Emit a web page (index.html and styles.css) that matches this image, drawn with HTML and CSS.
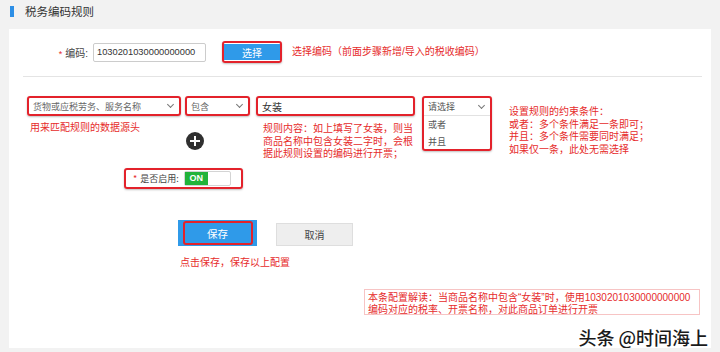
FILE: index.html
```html
<!DOCTYPE html>
<html>
    <head>
        <meta charset="UTF-8" />
        <link rel="stylesheet" href="styles.css">
    </head>
    <body>
        <div class="page-head">
            <span class="bar"></span>
            <span class="title">税务编码规则</span>
        </div>

        <div class="panel">
            <div class="code-row">
                <label class="lbl"><em>*</em>编码:</label>
                <input class="code-input" type="text" value="1030201030000000000">
                <div class="mark btn-mark"><button class="btn-pick">选择</button></div>
                <span class="note">选择编码（前面步骤新增/导入的税收编码）</span>
            </div>

            <div class="divider"></div>

            <div class="rule-row">
                <div class="col col-src">
                    <div class="mark sel">货物或应税劳务、服务名称<i class="chev"></i></div>
                    <p class="note note-src">用来匹配规则的数据源头</p>
                </div>
                <div class="col col-op">
                    <div class="mark sel">包含<i class="chev"></i></div>
                    <div class="plus"><span></span></div>
                </div>
                <div class="col col-val">
                    <div class="mark sel val">女装</div>
                    <p class="note note-val">规则内容：如上填写了女装，则当<br>商品名称中包含女装二字时，会根<br>据此规则设置的编码进行开票；</p>
                </div>
                <div class="col col-logic">
                    <div class="mark drop">
                        <div class="drop-head">请选择<i class="chev"></i></div>
                        <div class="drop-opt">或者</div>
                        <div class="drop-opt">并且</div>
                    </div>
                </div>
                <p class="note note-logic">设置规则的约束条件：<br>或者：多个条件满足一条即可；<br>并且：多个条件需要同时满足；<br>如果仅一条，此处无需选择</p>
            </div>

            <div class="mark enable-row">
                <em>*</em><span class="enable-lbl">是否启用:</span>
                <span class="toggle"><b>ON</b></span>
            </div>

            <div class="btn-row">
                <button class="btn-save">保存</button>
                <button class="btn-cancel">取消</button>
            </div>
            <p class="note note-save">点击保存，保存以上配置</p>

            <div class="explain">
                本条配置解读：当商品名称中包含“女装”时，使用1030201030000000000<br>
                编码对应的税率、开票名称，对此商品订单进行开票
            </div>

            <div class="watermark">头条 @时间海上</div>
        </div>
    </body>
</html>
```

FILE: styles.css
```css
body {
    margin: 0;
    background-color: #f2f2f2;
    font-family: "Liberation Sans", "Noto Sans CJK SC", sans-serif;
    color: #333;
}

p {
    margin: 0;
}

em {
    font-style: normal;
    color: #e62b2b;
}

.page-head {
    height: 29px;
    display: flex;
    align-items: center;
    padding-left: 10px;
    box-sizing: border-box;
    padding-bottom: 7px;
}

.bar {
    width: 4px;
    height: 11px;
    background-color: #2d8fe6;
    margin-right: 11px;
}

.title {
    font-size: 11.5px;
    color: #333;
}

.panel {
    margin: 0 9px;
    height: 319px;
    background-color: white;
    padding-top: 12px;
    box-sizing: border-box;
}

.note {
    color: #e62b2b;
    font-size: 10px;
    line-height: 12.5px;
}

.mark {
    border: 2px solid #e3222b;
    border-radius: 3px;
    box-sizing: border-box;
    box-shadow: 0 1px 2px rgba(0, 0, 0, 0.25);
}

/* 编码 */
.code-row {
    display: flex;
    align-items: center;
    height: 22px;
}

.lbl {
    width: 79px;
    text-align: right;
    font-size: 10px;
    color: #444;
    margin-right: 5px;
}

.lbl em {
    margin-right: 3px;
    font-size: 9px;
}

.code-input {
    width: 113px;
    height: 19px;
    box-sizing: border-box;
    border: 1px solid #ccc;
    border-radius: 2px;
    padding: 0 0 0 3px;
    font-family: "Liberation Sans", sans-serif;
    font-size: 9.3px;
    color: #333;
}

.btn-mark {
    margin-left: 16px;
    width: 60px;
    height: 22px;
    padding: 1px 0;
}

.btn-pick {
    display: block;
    width: 100%;
    height: 100%;
    border: 0;
    background-color: #2f9ae9;
    color: white;
    font-family: "Noto Sans CJK SC", sans-serif;
    font-size: 10px;
    padding: 0;
}

.code-row .note {
    margin-left: 10px;
}

.divider {
    margin: 13px 9px 0 14px;
    height: 1px;
    background-color: #e4e4e4;
}

/* 规则 */
.rule-row {
    display: flex;
    align-items: flex-start;
    margin-top: 19px;
    padding-left: 18px;
    height: 68px;
}

.sel {
    height: 20px;
    display: flex;
    align-items: center;
    padding-left: 4px;
    padding-right: 6px;
    font-size: 9px;
    color: #666;
    font-family: "Noto Sans CJK SC", sans-serif;
}

.chev {
    margin-left: auto;
    width: 4px;
    height: 4px;
    border-right: 1px solid #777;
    border-bottom: 1px solid #777;
    transform: rotate(45deg);
    margin-top: -3px;
}

.col-src .sel {
    width: 154px;
}

.col-op {
    margin-left: 4px;
}

.col-op .sel {
    width: 65px;
}

.plus {
    margin: 16px 0 0 1px;
    width: 18px;
    height: 18px;
    border-radius: 50%;
    background-color: #303030;
    display: flex;
    align-items: center;
    justify-content: center;
}

.plus span {
    width: 10px;
    height: 10px;
    background:
        linear-gradient(#fff, #fff) center / 10px 2px no-repeat,
        linear-gradient(#fff, #fff) center / 2px 10px no-repeat;
}

.col-val {
    margin-left: 6px;
}

.col-val .val {
    width: 159px;
    color: #333;
    font-size: 10px;
}

.note-src {
    margin: 6px 0 0 3px;
}

.note-val {
    margin: 7px 0 0 7px;
}

.col-logic {
    margin-left: 7px;
}

.drop {
    width: 70px;
    height: 55px;
    font-family: "Noto Sans CJK SC", sans-serif;
    font-size: 9px;
    color: #555;
}

.drop-head {
    height: 17px;
    display: flex;
    align-items: center;
    padding: 0 6px 0 4px;
    border-bottom: 1px solid #e2e2e2;
}

.drop-opt {
    height: 17px;
    line-height: 17px;
    padding-left: 4px;
}

.note-logic {
    margin: 10px 0 0 17px;
}

/* 是否启用 */
.enable-row {
    margin: 4px 0 0 115px;
    width: 119px;
    height: 21px;
    display: flex;
    align-items: center;
    padding-left: 7px;
    font-size: 9px;
    font-family: "Noto Sans CJK SC", sans-serif;
}

.enable-lbl {
    margin-left: 3px;
    color: #444;
}

.toggle {
    margin-left: 5px;
    width: 47px;
    height: 15px;
    box-sizing: border-box;
    border: 1px solid #d4d4d4;
    border-radius: 2px;
    display: flex;
}

.toggle b {
    width: 23px;
    background-color: #22b33a;
    color: white;
    font-family: "Liberation Sans", sans-serif;
    font-size: 9px;
    line-height: 13px;
    text-align: center;
}

/* 按钮 */
.btn-row {
    margin: 31px 0 0 169px;
    display: flex;
    align-items: flex-end;
}

.btn-save {
    position: relative;
    width: 79px;
    height: 26px;
    border: 0;
    background-color: #2f9ae9;
    color: white;
    font-family: "Noto Sans CJK SC", sans-serif;
    font-size: 10.5px;
    padding: 0;
}

.btn-save::after {
    content: "";
    position: absolute;
    left: 5px;
    right: 4px;
    top: 1px;
    bottom: 1px;
    border: 2px solid #e3222b;
    border-radius: 3px;
}

.btn-cancel {
    margin-left: 19px;
    width: 77px;
    height: 23px;
    border: 1px solid #dedede;
    background-color: #eeeeee;
    color: #444;
    font-family: "Noto Sans CJK SC", sans-serif;
    font-size: 10px;
    padding: 0;
}

.note-save {
    margin: 11px 0 0 171px;
}

.explain {
    margin: 19px 0 0 355px;
    width: 336px;
    height: 26px;
    box-sizing: border-box;
    border: 1px solid #f7c4c4;
    padding: 2px 0 0 3px;
    color: #e62b2b;
    font-size: 10px;
    line-height: 12px;
}

.watermark {
    margin-top: 12px;
    text-align: right;
    padding-right: 3px;
    font-family: "Noto Sans CJK SC", sans-serif;
    font-size: 18px;
    font-weight: 500;
    line-height: 20px;
    color: #1a1a1a;
    text-shadow: 0 0 2px #fff;
}
```
